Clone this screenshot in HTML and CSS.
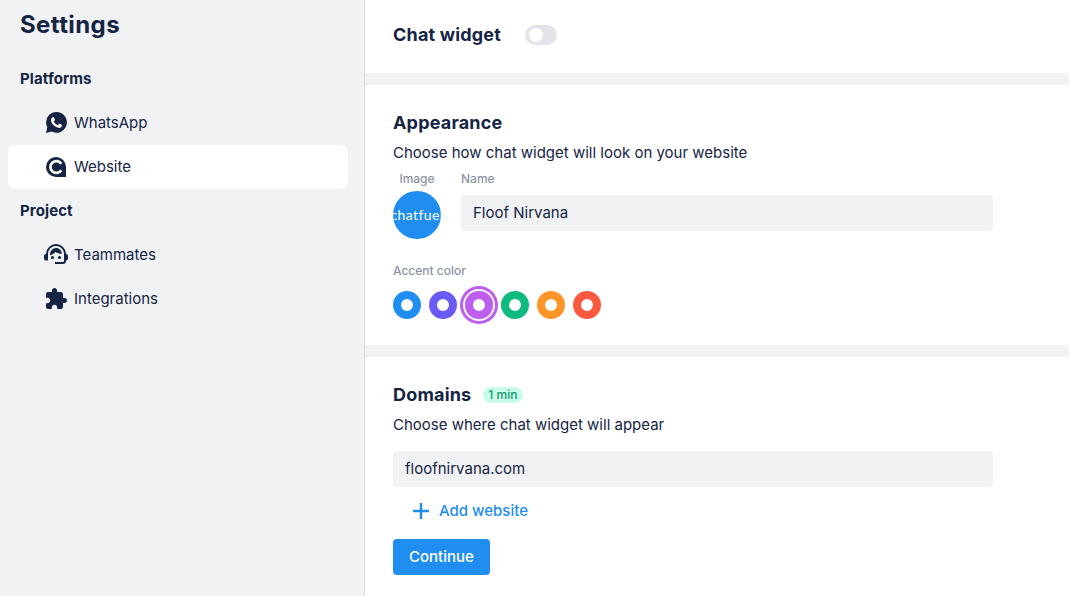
FILE: index.html
```html
<!DOCTYPE html>
<html lang="en">
<head>
    <meta charset="UTF-8">
    <meta name="viewport" content="width=device-width, initial-scale=1.0">
    <title>Settings</title>
    <link rel="stylesheet" href="styles.css">
</head>
<body>

<aside class="sidebar">
    <h1 class="sidebar-title">Settings</h1>

    <nav class="menu">
        <h3 class="menu-heading">Platforms</h3>
        <a class="menu-item">
            <svg class="icon" viewBox="0 0 24 24">
                <path fill="currentColor" d="M12.5 1A10.4 10.4 0 0 0 3.300 16.300L2 22l5.600-1.400A10.400 10.400 0 1 0 12.500 1z"/>
                <path fill="#fff" d="M9.300 6.200c.4 0 .6.1.8.5l.8 1.900c.1.300 0 .5-.2.800l-.9 1.100c.9 1.700 2.200 2.900 4 3.700l1.100-1.300c.2-.3.400-.3.700-.2l2 1c.300.100.4.300.4.600 0 1.700-1.500 2.700-2.900 2.700-3.700-.3-8.100-4.400-8.200-7.900 0-1.300 1.100-2.900 2.400-2.900z"/>
            </svg>
            <span>WhatsApp</span>
        </a>
        <a class="menu-item active">
            <svg class="icon" viewBox="0 0 24 24">
                <path fill="currentColor" d="M12 2a10 10 0 0 0 0 20h10V12A10 10 0 0 0 12 2z"/>
                <path fill="none" stroke="#fff" stroke-width="2.700" d="M17.300 8.800A5.900 5.900 0 1 0 17.300 15.200"/>
            </svg>
            <span>Website</span>
        </a>

        <h3 class="menu-heading">Project</h3>
        <a class="menu-item">
            <svg class="icon" viewBox="0 0 24 24">
                <path fill="none" stroke="currentColor" stroke-width="2" d="M3 13v-2a9 9 0 0 1 18 0v7a2 2 0 0 1-2 2h-8"/>
                <path fill="currentColor" d="M4 10.500v7H2a2 2 0 0 1-2-2v-2.500a2 2 0 0 1 1.500-1.900zM20 10.500v7h2a2 2 0 0 0 2-2v-2.500a2 2 0 0 0-1.500-1.900zM6 12.200C6 8 8.600 5 12 5c3.300 0 5.500 2.300 6 5.800-2.700 0-5-.6-6.500-2C10.500 10.400 8.600 11.700 6 12.200z"/>
                <circle fill="currentColor" cx="8.500" cy="14.500" r="1.600"/>
                <circle fill="currentColor" cx="15.500" cy="14.500" r="1.600"/>
            </svg>
            <span>Teammates</span>
        </a>
        <a class="menu-item">
            <svg class="icon" viewBox="0 0 24 24">
                <path fill="currentColor" d="M20.500 11H19V7c0-1.100-.9-2-2-2h-4V3.500C13 2.120 11.880 1 10.500 1S8 2.120 8 3.500V5H4c-1.100 0-1.990.9-1.990 2v3.800H3.500c1.490 0 2.700 1.210 2.700 2.700s-1.210 2.700-2.700 2.700H2V20c0 1.100.9 2 2 2h3.800v-1.500c0-1.490 1.210-2.700 2.700-2.700 1.490 0 2.700 1.210 2.700 2.700V22H17c1.100 0 2-.9 2-2v-4h1.500c1.380 0 2.500-1.120 2.500-2.500S21.880 11 20.500 11z"/>
            </svg>
            <span>Integrations</span>
        </a>
    </nav>
</aside>

<main class="content">
    <section class="section section-header">
        <h2>Chat widget</h2>
        <div class="toggle"><div class="toggle-knob"></div></div>
    </section>

    <section class="section appearance">
        <h2>Appearance</h2>
        <p>Choose how chat widget will look on your website</p>
        <div class="profile">
            <div class="profile-image">
                <span class="label">Image</span>
                <div class="avatar"><span>chatfuel</span></div>
            </div>
            <div class="profile-name">
                <label class="label" for="name">Name</label>
                <input class="input" type="text" id="name" value="Floof Nirvana">
            </div>
        </div>
        <div class="label accent-label">Accent color</div>
        <div class="colors">
            <div class="color blue"></div>
            <div class="color indigo"></div>
            <div class="color purple selected"></div>
            <div class="color green"></div>
            <div class="color orange"></div>
            <div class="color red"></div>
        </div>
    </section>

    <section class="section domains">
        <div class="domains-title">
            <h2>Domains</h2>
            <span class="badge">1 min</span>
        </div>
        <p>Choose where chat widget will appear</p>
        <input class="input" type="text" value="floofnirvana.com">
        <button class="add-btn">
            <svg class="plus" viewBox="0 0 16 16">
                <path fill="none" stroke="currentColor" stroke-width="2.400" d="M8 0v16M0 8h16"/>
            </svg>
            <span>Add website</span>
        </button>
        <button class="continue-btn">Continue</button>
    </section>
</main>

</body>
</html>
```
FILE: styles.css
```css
:root {
    --text-color: #152444;
    --muted-color: #8c93a3;
    --panel-bg: #f1f2f4;
    --line-color: #d5d7dc;
    --blue: #208ef0;
}

* {
    box-sizing: border-box;
}

body {
    margin: 0;
    display: flex;
    height: 100vh;
    overflow: hidden;
    font-family: Inter, sans-serif;
    font-size: 15px;
    line-height: 20px;
    color: var(--text-color);
    background-color: #fff;
}

h1, h2, h3, p {
    margin: 0;
}

h2 {
    font-size: 18px;
    line-height: 24px;
    font-weight: 700;
    letter-spacing: 0.18px;
}

button, input {
    font: inherit;
    border: none;
}

/* Sidebar */
.sidebar {
    flex: none;
    width: 365px;
    padding: 9px 16px 0 8px;
    background-color: var(--panel-bg);
    border-right: 1px solid var(--line-color);
}

.sidebar-title {
    padding-left: 12px;
    margin-bottom: 16px;
    font-size: 24px;
    line-height: 32px;
    font-weight: 700;
    letter-spacing: 0.4px;
}

.menu-heading {
    padding: 12px;
    font-size: 15px;
    line-height: 20px;
    font-weight: 700;
    letter-spacing: 0.1px;
}

.menu-item {
    display: flex;
    align-items: center;
    gap: 6px;
    height: 44px;
    padding-left: 36px;
    border-radius: 8px;
}

.menu-item.active {
    background-color: #fff;
}

.icon {
    width: 24px;
    height: 24px;
}

/* Content */
.content {
    flex: 1;
}

.section {
    padding: 0 28px;
    border-bottom: 12px solid var(--panel-bg);
}

.section-header {
    display: flex;
    gap: 24px;
    height: 85px;
    padding-top: 23px;
}

.toggle {
    width: 32px;
    height: 20px;
    margin-top: 2px;
    padding: 3px 4px;
    border-radius: 10px;
    background-color: #e3e4ea;
}

.toggle-knob {
    width: 14px;
    height: 14px;
    border-radius: 50%;
    background-color: #fff;
}

.appearance {
    height: 272px;
    padding-top: 26px;
}

.appearance p,
.domains p {
    margin-top: 8px;
}

.label {
    display: block;
    font-size: 12px;
    line-height: 16px;
    font-weight: 500;
    color: var(--muted-color);
}

.profile {
    display: flex;
    gap: 20px;
    margin-top: 8px;
}

.profile-image {
    width: 48px;
    text-align: center;
}

/* The wordmark is wider than the circle and gets clipped by it */
.avatar {
    display: flex;
    align-items: center;
    justify-content: center;
    width: 48px;
    height: 48px;
    margin-top: 4px;
    overflow: hidden;
    border-radius: 50%;
    background-color: var(--blue);
    color: #fff;
    font-family: Lato, sans-serif;
    font-size: 14px;
    letter-spacing: 0.4px;
}

.profile-name .input {
    width: 532px;
    margin-top: 8px;
}

.input {
    display: block;
    width: 600px;
    height: 36px;
    padding: 0 12px 1px;
    border-radius: 4px;
    background-color: var(--panel-bg);
    color: var(--text-color);
}

.accent-label {
    margin-top: 24px;
}

.colors {
    display: flex;
    gap: 8px;
    margin-top: 12px;
}

.color {
    width: 28px;
    height: 28px;
    border: 8px solid;
    border-radius: 50%;
}

.color.selected {
    box-shadow: 0 0 0 2px #fff, 0 0 0 5px #be5eee;
}

.blue { border-color: #208ef0; }
.indigo { border-color: #6a5bf7; }
.purple { border-color: #be5eee; }
.green { border-color: #10bb82; }
.orange { border-color: #ff9528; }
.red { border-color: #fc593f; }

.domains {
    padding-top: 26px;
    border-bottom: none;
}

.domains-title {
    display: flex;
    align-items: center;
    gap: 11.5px;
}

.badge {
    padding: 0 5.5px;
    border-radius: 8px;
    background-color: #c9fdea;
    color: #12986a;
    font-size: 12px;
    line-height: 16px;
    font-weight: 500;
}

.domains .input {
    margin-top: 16px;
}

.add-btn {
    display: flex;
    align-items: center;
    gap: 10px;
    height: 36px;
    margin: 6px 0 10px;
    padding: 0 20px;
    background: none;
    color: var(--blue);
    font-weight: 500;
}

.plus {
    width: 16px;
    height: 16px;
}

.continue-btn {
    height: 36px;
    padding: 0 16px;
    border-radius: 4px;
    background-color: var(--blue);
    color: #fff;
    font-weight: 500;
}
```
